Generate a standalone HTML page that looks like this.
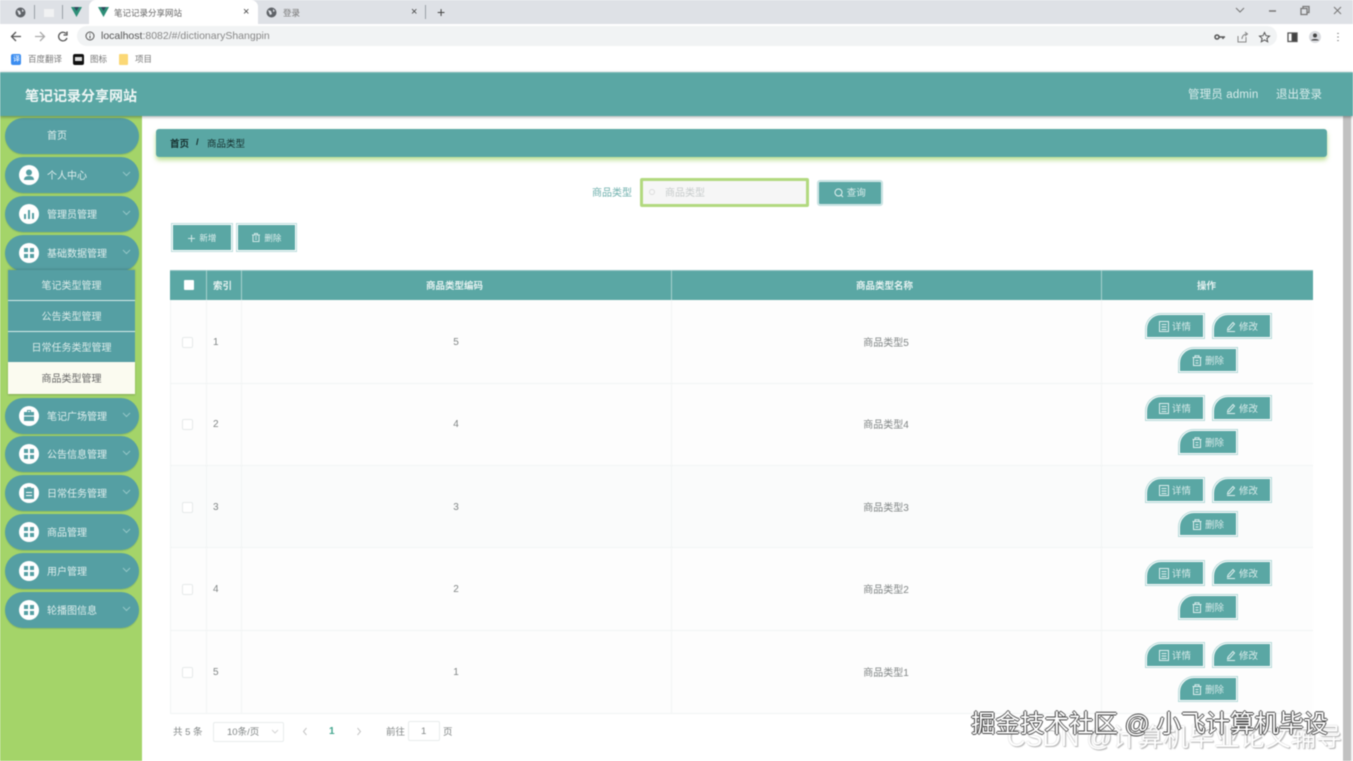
<!DOCTYPE html>
<html lang="zh"><head><meta charset="utf-8"><title>笔记记录分享网站</title>
<style>
html,body{margin:0;padding:0;width:1353px;height:761px;overflow:hidden;background:#fff}
#r{position:relative;width:1353px;height:761px;overflow:hidden;font-family:"Liberation Sans","Noto Sans CJK SC",sans-serif;filter:blur(.55px);background:#fff}
#r div,#r svg.a{position:absolute;box-sizing:border-box}
.t{white-space:nowrap;line-height:1;margin-top:2px}
.m{left:5px;width:134px;height:36px;background:#559fa3;border-radius:18px;box-shadow:0 1px 1px rgba(60,110,80,.25)}
.c{left:14px;top:8px;width:20px;height:20px;border-radius:50%;background:#fff}
.ml{left:42px;top:14px;font-size:10px;color:#dfeeed;white-space:nowrap;line-height:12px}
.ch{left:117px;top:13px}
.s{left:8px;width:127px;height:31px;background:#559fa3;color:#dcecea;font-size:10px;text-align:center;line-height:30px;padding-top:2px;border-bottom:1px solid #d8ecea}
.b{background:#5aa7a4;color:#dceeed;font-size:9px;border:1px solid #fff;outline:1px solid #bcdcdc;text-align:center;white-space:nowrap}
.ab{width:58px;height:24px;line-height:23px;padding-top:1px;background:#5aa7a4;color:#d8ebea;font-size:9.5px;text-align:center;border-radius:15px 0 0 0;border:1px solid #fff;box-shadow:0 0 0 1px #b5d9d8}
.ab svg{vertical-align:-1.5px;margin-right:3px}
.v{height:413px;top:300px;width:1px;background:#f2f5f5}
.hv{top:270px;height:30px;width:1px;background:#a6d0ce}
.rl{left:170px;width:1143px;height:1px;background:#f1f4f4}
.tx{font-size:10px;color:#808585;text-align:center;line-height:12px;white-space:nowrap;margin-top:1px}
.cb{left:182px;width:11px;height:11px;border:1px solid #e6e9e9;border-radius:2px;background:#fff}
</style></head><body>
<svg width="0" height="0" style="position:absolute"><defs>
<symbol id="i1" viewBox="0 0 10 11"><path d="M.5.5h9v10h-9zM2.500 3.500h5M2.500 6h5M2.500 8.500h5" fill="none" stroke="#dceeed"/></symbol>
<symbol id="i2" viewBox="0 0 10 11"><path d="M2 7L7 1.500l1.500 1.500L3.500 8.500 1.500 9zM1 10.500h8" fill="none" stroke="#dceeed"/></symbol>
<symbol id="i3" viewBox="0 0 10 11"><path d="M.5 2.500h9M3 2.500V.8h4v1.700M1.500 2.500v8h7v-8M3.500 5.500h3M3.500 8h3" fill="none" stroke="#dceeed"/></symbol>
<symbol id="g" viewBox="0 0 10 10"><path d="M0 0h4v4H0zM6 0h4v4H6zM0 6h4v4H0zM6 6h4v4H6z" fill="#559fa3"/></symbol>
<symbol id="d" viewBox="0 0 9 8"><path d="M1 2l3.500 3.500L8 2" fill="none" stroke="#93c6c6"/></symbol>
</defs></svg>
<div id="r">
<!-- browser chrome -->
<div style="left:0;top:0;width:1353px;height:24px;background:#dee1e6"></div>
<div style="left:89px;top:0;width:169px;height:24px;background:#fff;border-radius:7px 7px 0 0"></div>
<svg class="a" style="left:15px;top:7px" width="11" height="11"><circle cx="5.500" cy="5.500" r="5" fill="#5f6368"/><path d="M2 3l3 1 1 3-2 1zM7 2l2 2-2 1z" fill="#dee1e6"/></svg>
<div style="left:34px;top:5px;width:1px;height:14px;background:#9aa0a6"></div>
<div style="left:44px;top:9px;width:10px;height:8px;background:#f1f2f3"></div>
<div style="left:62px;top:5px;width:1px;height:14px;background:#9aa0a6"></div>
<svg class="a" style="left:71px;top:7px" width="11" height="10"><path d="M0 0h11L5.500 10z" fill="#2e8f78"/><path d="M3 0h5L5.500 4z" fill="#31475e"/></svg>
<svg class="a" style="left:98px;top:7px" width="11" height="10"><path d="M0 0h11L5.500 10z" fill="#2e8f78"/><path d="M3 0h5L5.500 4z" fill="#31475e"/></svg>
<div class="t" style="left:114px;top:7px;font-size:8.500px;color:#666">笔记记录分享网站</div>
<div class="t" style="left:243px;top:5px;font-size:11px;color:#444">×</div>
<svg class="a" style="left:266px;top:7px" width="11" height="11"><circle cx="5.500" cy="5.500" r="5" fill="#5f6368"/><path d="M2 3l3 1 1 3-2 1zM7 2l2 2-2 1z" fill="#dee1e6"/></svg>
<div class="t" style="left:283px;top:7px;font-size:8.500px;color:#777">登录</div>
<div class="t" style="left:411px;top:5px;font-size:11px;color:#444">×</div>
<div style="left:425px;top:5px;width:1px;height:14px;background:#9aa0a6"></div>
<div class="t" style="left:437px;top:3px;font-size:14px;color:#444">+</div>
<svg class="a" style="left:1235px;top:5px" width="110" height="12" fill="none" stroke="#777"><path d="M1 3l4 4 4-4"/><path d="M34 6h7" stroke-width="1.500"/><path d="M66 3.500h6v6h-6zM68 3.500v-2h6v6h-2" stroke-width="1.300"/><path d="M99 2l7 7M106 2l-7 7"/></svg>
<svg class="a" style="left:10px;top:30px" width="60" height="13" fill="none" stroke="#555" stroke-width="1.300"><path d="M11 6.500H2M6 2L1.500 6.500 6 11"/><path d="M25 6.500h9M30 2l4.500 4.500L30 11" stroke="#aaa"/><path d="M56 3.500A4.300 4.300 0 1 0 57 8M57 1.500v3.500h-3.500"/></svg>
<div style="left:77px;top:26px;width:1200px;height:20px;border-radius:10px;background:#f1f3f4"></div>
<svg class="a" style="left:85px;top:31px" width="10" height="10" fill="none" stroke="#555"><circle cx="5" cy="5" r="4"/><path d="M5 4.500V7.500M5 2.500v1"/></svg>
<div class="t" style="left:101px;top:29px;font-size:10.500px;color:#888"><span style="color:#555">localhost</span>:8082/#/dictionaryShangpin</div>
<svg class="a" style="left:1214px;top:31px" width="130" height="12" fill="none" stroke="#555"><circle cx="3" cy="6" r="2" stroke-width="1.500"/><path d="M5 6h6M9 6v2" stroke-width="1.500"/><path d="M24 5v6h8V6M28 8c0-3 2-5 5-5M31 1l2.500 2-2.500 2" stroke="#888"/><path d="M50.500 1.500l1.500 3.200 3.500.4-2.600 2.300.8 3.400-3.200-1.800-3.200 1.800.8-3.400-2.600-2.300 3.500-.4z"/><path d="M74 2h9v8.500h-9z" stroke-width="1.300"/><rect x="78" y="2" width="5" height="8.500" fill="#444"/><circle cx="101" cy="6" r="6" fill="#dadce0" stroke="none"/><circle cx="101" cy="4.500" r="2" fill="#444" stroke="none"/><path d="M97 9.500c1-2 7-2 8 0z" fill="#444" stroke="none"/><path d="M124 2v.8M124 5.600v.8M124 9.200v.8" stroke-width="1.500"/></svg>
<div style="left:11px;top:54px;width:10px;height:11px;border-radius:2px;background:#3b8df0"></div>
<div class="t" style="left:13px;top:54px;font-size:7px;color:#fff">译</div>
<div class="t" style="left:28px;top:53px;font-size:8.500px;color:#777">百度翻译</div>
<div style="left:73px;top:54px;width:11px;height:11px;border-radius:2px;background:#111"></div>
<div style="left:75px;top:57px;width:7px;height:4px;background:#ddd"></div>
<div class="t" style="left:90px;top:53px;font-size:8.500px;color:#777">图标</div>
<div style="left:119px;top:54px;width:9px;height:11px;border-radius:1px;background:#fbd876"></div>
<div class="t" style="left:135px;top:53px;font-size:8.500px;color:#777">项目</div>
<!-- header -->
<div style="left:0;top:72px;width:1353px;height:44px;background:#5aa7a4;border-top:1px solid #82bcba;box-shadow:0 1px 3px rgba(0,0,0,.35);z-index:3"></div>
<div class="t" style="left:25px;top:87px;font-size:14px;font-weight:bold;color:#eef6f5;z-index:4">笔记记录分享网站</div>
<div class="t" style="left:1188px;top:88px;font-size:11.500px;letter-spacing:.15px;color:#d8eceb;z-index:4">管理员 admin</div>
<div class="t" style="left:1276px;top:88px;font-size:11.500px;color:#d8eceb;z-index:4">退出登录</div>
<!-- sidebar -->
<div style="left:0;top:116px;width:142px;height:645px;background:#a4d469"></div>
<div class="m" style="top:118px"><div class="ml" style="top:13px">首页</div></div>
<div class="m" style="top:157px"><div class="c"></div><svg class="a" style="left:19px;top:12px" width="10" height="12" fill="#559fa3"><circle cx="5" cy="3.500" r="3"/><path d="M0 11c0-3 2-4 5-4s5 1 5 4z"/></svg><div class="ml">个人中心</div><svg class="a ch" width="9" height="8"><use href="#d"/></svg></div>
<div class="m" style="top:196px"><div class="c"></div><svg class="a" style="left:19px;top:12px" width="10" height="12" fill="#559fa3"><path d="M0 6h2v5H0zM4 2h2v9H4zM8 5h2v6H8z"/></svg><div class="ml">管理员管理</div><svg class="a ch" width="9" height="8"><use href="#d"/></svg></div>
<div class="m" style="top:235px"><div class="c"></div><svg class="a" style="left:19px;top:13px" width="10" height="10"><use href="#g"/></svg><div class="ml">基础数据管理</div><svg class="a ch" width="9" height="8"><use href="#d"/></svg></div>
<div class="s" style="top:270px;box-shadow:0 -1px 2px rgba(0,0,0,.15)">笔记类型管理</div>
<div class="s" style="top:301px">公告类型管理</div>
<div class="s" style="top:332px">日常任务类型管理</div>
<div class="s" style="top:362px;height:32px;background:#fbfbf0;color:#666;line-height:32px;border:0;box-shadow:0 1px 2px rgba(0,0,0,.2)">商品类型管理</div>
<div class="m" style="top:398px"><div class="c"></div><svg class="a" style="left:19px;top:12px" width="10" height="11" fill="#559fa3"><path d="M3 0h4v2h3v9H0V2h3zM4 1v1h2V1z"/><path d="M0 5.500h10v1H0z" fill="#fff"/></svg><div class="ml">笔记广场管理</div><svg class="a ch" width="9" height="8"><use href="#d"/></svg></div>
<div class="m" style="top:436px"><div class="c"></div><svg class="a" style="left:19px;top:13px" width="10" height="10"><use href="#g"/></svg><div class="ml">公告信息管理</div><svg class="a ch" width="9" height="8"><use href="#d"/></svg></div>
<div class="m" style="top:475px"><div class="c"></div><svg class="a" style="left:19px;top:12px" width="10" height="12" fill="#559fa3"><path d="M0 1h3V0h4v1h3v11H0z"/><path d="M2 5h6v1H2zM2 8h6v1H2z" fill="#fff"/></svg><div class="ml">日常任务管理</div><svg class="a ch" width="9" height="8"><use href="#d"/></svg></div>
<div class="m" style="top:514px"><div class="c"></div><svg class="a" style="left:19px;top:13px" width="10" height="10"><use href="#g"/></svg><div class="ml">商品管理</div><svg class="a ch" width="9" height="8"><use href="#d"/></svg></div>
<div class="m" style="top:553px"><div class="c"></div><svg class="a" style="left:19px;top:13px" width="10" height="10"><use href="#g"/></svg><div class="ml">用户管理</div><svg class="a ch" width="9" height="8"><use href="#d"/></svg></div>
<div class="m" style="top:592px"><div class="c"></div><svg class="a" style="left:19px;top:13px" width="10" height="10"><use href="#g"/></svg><div class="ml">轮播图信息</div><svg class="a ch" width="9" height="8"><use href="#d"/></svg></div>
<!-- breadcrumb -->
<div style="left:156px;top:129px;width:1171px;height:28px;background:#5aa7a4;border-radius:3px;box-shadow:0 3px 5px rgba(164,212,105,.75)"></div>
<div class="t" style="left:170px;top:138px;font-size:9.500px;color:#16302f;font-weight:bold">首页</div>
<div class="t" style="left:196px;top:136px;font-size:9.500px;color:#16302f;font-weight:bold">/</div>
<div class="t" style="left:207px;top:138px;font-size:9.500px;color:#16302f">商品类型</div>
<!-- search -->
<div class="t" style="left:592px;top:187px;font-size:10px;color:#6fb0ad">商品类型</div>
<div style="left:640px;top:178px;width:169px;height:29px;background:#f6f6f6;border:3px solid #b2d97f;border-radius:2px"></div>
<div style="left:649px;top:189px;width:6px;height:6px;border:1px solid #ddd;border-radius:50%"></div>
<div class="t" style="left:665px;top:187px;font-size:10px;color:#c8cccc">商品类型</div>
<div class="b" style="left:818px;top:181px;width:64px;height:24px;line-height:24px;font-size:9.500px;border:1px solid #d5e9e9;outline:1px solid #c2dfdf;border-radius:2px"><svg width="10" height="10" fill="none" stroke="#e3f1f0" style="vertical-align:-2px"><circle cx="4.500" cy="4.500" r="3.500"/><path d="M7 7l2 2"/></svg> 查询</div>
<div class="b" style="left:172px;top:224px;width:60px;height:27px;line-height:26px;font-size:8.500px"><svg width="7" height="7" stroke="#cfe7e6" fill="none" style="vertical-align:-.500px"><path d="M3.500 0v7M0 3.500h7"/></svg>&nbsp; 新增</div>
<div class="b" style="left:237px;top:224px;width:59px;height:27px;line-height:26px;font-size:8.500px"><svg width="8" height="9" stroke="#cfe7e6" fill="none" style="vertical-align:-1px"><path d="M0 2h8M2.500 2V.5h3V2M1 2v6.500h6V2M3 4h2M3 6h2"/></svg>&nbsp; 删除</div>
<!-- table -->
<div style="left:170px;top:270px;width:1143px;height:30px;background:#5aa7a4;border-top:1px solid #8fc2c0"></div>
<div style="left:170px;top:300px;width:1143px;height:413px;background:#fdfdfd"></div>
<div style="left:170px;top:465px;width:1143px;height:82px;background:#fafbfb"></div>
<div class="hv" style="left:206px"></div><div class="hv" style="left:241px"></div><div class="hv" style="left:671px"></div><div class="hv" style="left:1101px"></div>
<div class="v" style="left:170px"></div><div class="v" style="left:206px"></div><div class="v" style="left:241px"></div><div class="v" style="left:671px"></div><div class="v" style="left:1101px"></div>
<div class="rl" style="top:383px"></div><div class="rl" style="top:465px"></div><div class="rl" style="top:547px"></div><div class="rl" style="top:630px"></div><div class="rl" style="top:713px"></div>
<div style="left:184px;top:280px;width:10px;height:10px;background:#fff;border-radius:1px"></div>
<div class="t" style="left:213px;top:280px;font-size:9.500px;color:#e6f2f1;font-weight:bold">索引</div>
<div class="t" style="left:426px;top:280px;font-size:9.500px;color:#e6f2f1;font-weight:bold">商品类型编码</div>
<div class="t" style="left:856px;top:280px;font-size:9.500px;color:#e6f2f1;font-weight:bold">商品类型名称</div>
<div class="t" style="left:1197px;top:280px;font-size:9.500px;color:#e6f2f1;font-weight:bold">操作</div>

<div class="cb" style="top:337px"></div><div class="tx" style="left:213px;top:336px">1</div><div class="tx" style="left:241px;width:430px;top:336px">5</div><div class="tx" style="left:671px;width:430px;top:336px;margin-top:2px">商品类型5</div>
<div class="ab" style="left:1146px;top:314px"><svg width="10" height="11"><use href="#i1"/></svg>详情</div><div class="ab" style="left:1213px;top:314px"><svg width="10" height="11"><use href="#i2"/></svg>修改</div><div class="ab" style="left:1179px;top:348px"><svg width="10" height="11"><use href="#i3"/></svg>删除</div>
<div class="cb" style="top:419px"></div><div class="tx" style="left:213px;top:418px">2</div><div class="tx" style="left:241px;width:430px;top:418px">4</div><div class="tx" style="left:671px;width:430px;top:418px;margin-top:2px">商品类型4</div>
<div class="ab" style="left:1146px;top:396px"><svg width="10" height="11"><use href="#i1"/></svg>详情</div><div class="ab" style="left:1213px;top:396px"><svg width="10" height="11"><use href="#i2"/></svg>修改</div><div class="ab" style="left:1179px;top:430px"><svg width="10" height="11"><use href="#i3"/></svg>删除</div>
<div class="cb" style="top:502px"></div><div class="tx" style="left:213px;top:501px">3</div><div class="tx" style="left:241px;width:430px;top:501px">3</div><div class="tx" style="left:671px;width:430px;top:501px;margin-top:2px">商品类型3</div>
<div class="ab" style="left:1146px;top:478px"><svg width="10" height="11"><use href="#i1"/></svg>详情</div><div class="ab" style="left:1213px;top:478px"><svg width="10" height="11"><use href="#i2"/></svg>修改</div><div class="ab" style="left:1179px;top:512px"><svg width="10" height="11"><use href="#i3"/></svg>删除</div>
<div class="cb" style="top:584px"></div><div class="tx" style="left:213px;top:583px">4</div><div class="tx" style="left:241px;width:430px;top:583px">2</div><div class="tx" style="left:671px;width:430px;top:583px;margin-top:2px">商品类型2</div>
<div class="ab" style="left:1146px;top:561px"><svg width="10" height="11"><use href="#i1"/></svg>详情</div><div class="ab" style="left:1213px;top:561px"><svg width="10" height="11"><use href="#i2"/></svg>修改</div><div class="ab" style="left:1179px;top:595px"><svg width="10" height="11"><use href="#i3"/></svg>删除</div>
<div class="cb" style="top:667px"></div><div class="tx" style="left:213px;top:666px">5</div><div class="tx" style="left:241px;width:430px;top:666px">1</div><div class="tx" style="left:671px;width:430px;top:666px;margin-top:2px">商品类型1</div>
<div class="ab" style="left:1146px;top:643px"><svg width="10" height="11"><use href="#i1"/></svg>详情</div><div class="ab" style="left:1213px;top:643px"><svg width="10" height="11"><use href="#i2"/></svg>修改</div><div class="ab" style="left:1179px;top:677px"><svg width="10" height="11"><use href="#i3"/></svg>删除</div>
<!-- pagination -->
<div class="t" style="left:173px;top:726px;font-size:9.500px;color:#808585">共 5 条</div>
<div style="left:213px;top:722px;width:71px;height:20px;border:1px solid #e8ecec;border-radius:2px"></div>
<div class="t" style="left:227px;top:726px;font-size:9.500px;color:#808585">10条/页</div>
<svg class="a" style="left:271px;top:729px" width="8" height="6" fill="none" stroke="#d5d5d5"><path d="M1 1l3 3 3-3"/></svg>
<svg class="a" style="left:302px;top:727px" width="6" height="9" fill="none" stroke="#c5c5c5"><path d="M4.500 1L1.500 4.500 4.500 8"/></svg>
<div class="t" style="left:329px;top:725px;font-size:10px;color:#3fa48c;font-weight:bold">1</div>
<svg class="a" style="left:356px;top:727px" width="6" height="9" fill="none" stroke="#c5c5c5"><path d="M1.500 1l3 3.500-3 3.500"/></svg>
<div class="t" style="left:386px;top:726px;font-size:9.500px;color:#808585">前往</div>
<div style="left:408px;top:721px;width:32px;height:20px;border:1px solid #e8ecec;border-radius:2px"></div>
<div class="t" style="left:421px;top:725px;font-size:9.500px;color:#808585">1</div>
<div class="t" style="left:443px;top:726px;font-size:9.500px;color:#808585">页</div>
<!-- scrollbar -->
<div style="left:1343px;top:116px;width:10px;height:645px;background:#c1c1c1;border-right:2px solid #f1f1f1"></div>
<!-- watermarks -->
<div class="t" style="left:1007px;top:724px;font-size:25.500px;color:#fff;text-shadow:0 0 1px #999,1px 1px 1px #aaa;opacity:.9;z-index:5">CSDN @计算机毕业论文辅导</div>
<div class="t" style="left:971px;top:711px;font-size:24.500px;color:#fff;text-shadow:-1px 0 0 #444,1px 0 0 #444,0 -1px 0 #444,0 1px 0 #444;z-index:6">掘金技术社区 @ 小飞计算机毕设</div>
</div>
</body></html>
